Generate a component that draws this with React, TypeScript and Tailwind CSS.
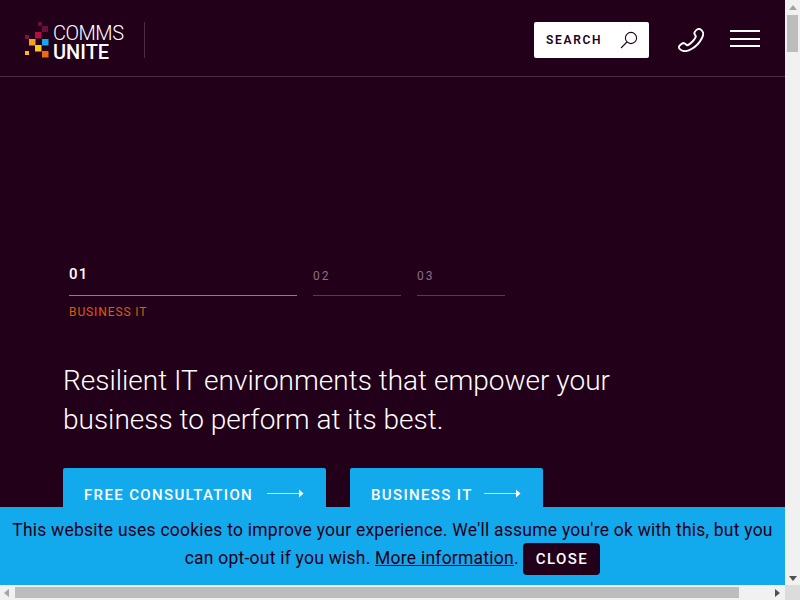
import React from "react";

const font = { fontFamily: '"Roboto", "Liberation Sans", sans-serif' };

function Logo() {
  const squares: [number, number, number, string][] = [
    [13, 0, 4, "#6a1038"],
    [17, 4, 6, "#6a1038"],
    [0, 13, 4, "#7d1338"],
    [10, 10, 6.5, "#b0123f"],
    [4, 17, 6.5, "#f5a21a"],
    [17, 17, 6.5, "#12a9ee"],
    [10, 23, 6.5, "#fdc81a"],
    [0, 29, 4, "#fdb90f"],
    [17, 29, 6.5, "#ee6a10"],
  ];
  return (
    <svg width="24" height="36" viewBox="0 0 24 36" className="shrink-0">
      {squares.map(([x, y, s, c], i) => (
        <rect key={i} x={x} y={y} width={s} height={s} fill={c} />
      ))}
    </svg>
  );
}

function Arrow() {
  return (
    <svg width="37" height="9" viewBox="0 0 37 9" className="shrink-0">
      <rect x="0" y="4" width="33" height="1" fill="#cfeefc" />
      <path d="M32 .5 L36.5 4.5 L32 8.5 Z" fill="#ffffff" />
    </svg>
  );
}

function Step({ n, active, w, label }: { n: string; active?: boolean; w: string; label?: string }) {
  return (
    <div className={w}>
      <div
        className={
          active
            ? "h-[38px] border-b border-[#f0640f] pt-[6px] text-[15px] leading-[20px] font-medium tracking-[1.2px] text-white"
            : "h-[38px] border-b border-[#5a3a52] pt-[9px] text-[12px] leading-[18px] tracking-[2px] text-[#8a7085]"
        }
      >
        {n}
      </div>
      {label && (
        <div className="mt-[9px] text-[12px] leading-[14px] tracking-[0.9px] text-[#e0590f]">{label}</div>
      )}
    </div>
  );
}

function Cta({ label, w, gap }: { label: string; w: string; gap: string }) {
  return (
    <div className={`${w} ${gap} flex h-[60px] items-start rounded-t-[2px] bg-[#12a9ed] pl-[21px] pt-[18px] text-[15px] leading-[18px] font-medium tracking-[1.35px] text-white`}>
      <span className="whitespace-nowrap">{label}</span>
      <span className="pt-[3px]">
        <Arrow />
      </span>
    </div>
  );
}

export default function App() {
  return (
    <div style={font} className="relative flex h-[600px] w-[800px] flex-col overflow-hidden bg-[#f1f1f1]">
      <div className="flex h-[585px] w-[800px]">
        <div className="h-[585px] w-[785px] overflow-hidden bg-[#22001a]">
          <header className="flex h-[77px] items-start border-b border-[#4a2c43] pl-[25px] pr-[25px] pt-[22px]">
            <div className="flex items-start gap-[4px]">
              <Logo />
              <div className="w-[72px] text-white">
                <div className="mt-[2px] text-[20px] leading-[19px] font-light tracking-[-0.5px]">COMMS</div>
                <div className="text-[20px] leading-[19px] font-medium tracking-[0px]">UNITE</div>
              </div>
            </div>
            <div className="ml-[19px] h-[36px] w-px bg-[#4a2c43]" />
            <div className="ml-auto flex h-[36px] w-[115px] items-center rounded-[2px] bg-white pl-[12px] pr-[11px]">
              <span className="text-[12px] font-semibold tracking-[1.7px] text-[#22001a]">SEARCH</span>
              <svg width="18" height="18" viewBox="0 0 18 18" className="ml-auto" fill="none" stroke="#22001a" strokeWidth="1.1">
                <circle cx="11" cy="7" r="5.6" />
                <path d="M7 11 L1 17" />
              </svg>
            </div>
            <svg width="26" height="24" viewBox="0 0 26 24" className="ml-[29px] mt-[6px]" fill="none" stroke="#ffffff" strokeWidth="1.9" strokeLinejoin="round">
              <path d="M20 1 C21.5 .4 24 2 25 4.5 C25.6 6 25 8 24 10 C22 14 18 18.5 13.5 21 C10.5 22.8 8 23.5 5.5 23 C3 22.6 .8 20.4 .8 19.2 C.8 18 3.8 15.5 5.4 15 C6.6 14.7 8.3 17.2 9.2 17.3 C11.5 17 17.5 11 17.8 8.4 C17.8 7.4 16.2 6.2 16.3 5.2 C16.5 3.8 18.6 1.6 20 1 Z" />
            </svg>
            <div className="ml-[26px] mt-[8px] flex w-[30px] flex-col gap-[5.5px]">
              <div className="h-[2px] bg-white" />
              <div className="h-[2px] bg-white" />
              <div className="h-[2px] bg-white" />
            </div>
          </header>
          <main className="pl-[64px] pt-[181px]">
            <div className="ml-[5px] flex items-start gap-[16px]">
              <Step n="01" active w="w-[228px]" label="BUSINESS IT" />
              <Step n="02" w="w-[88px]" />
              <Step n="03" w="w-[88px]" />
            </div>
            <h1 className="mt-[42px] -ml-px text-[28px] leading-[39px] font-light text-white">
              Resilient IT environments that empower your
              <br />
              business to perform at its best.
            </h1>
            <div className="ml-[-1px] mt-[29px] flex gap-[24px]">
              <Cta label="FREE CONSULTATION" w="w-[263px]" gap="gap-[14px]" />
              <Cta label="BUSINESS IT" w="w-[193px]" gap="gap-[11px]" />
            </div>
          </main>
        </div>
        <div className="flex h-[585px] w-[15px] flex-col items-center bg-[#f1f1f1]">
          <div className="mt-[5px] h-0 w-0 border-x-[4px] border-b-[5px] border-x-transparent border-b-[#a3a3a3]" />
          <div className="mt-[5px] h-[37px] w-[11px] bg-[#bdbdbd]" />
          <div className="mt-auto mb-[4px] h-0 w-0 border-x-[4px] border-t-[5px] border-x-transparent border-t-[#505050]" />
        </div>
      </div>
      <div className="flex h-[15px] w-[800px] items-center bg-[#f1f1f1]">
        <div className="ml-[4px] h-0 w-0 border-y-[4px] border-r-[5px] border-y-transparent border-r-[#a3a3a3]" />
        <div className="ml-[6px] h-[11px] w-[724px] bg-[#bdbdbd]" />
        <div className="ml-[36px] h-0 w-0 border-y-[4px] border-l-[5px] border-y-transparent border-l-[#505050]" />
        <div className="ml-auto h-[15px] w-[15px] bg-[#dcdcdc]" />
      </div>
      <div className="absolute left-0 top-[507px] h-[78px] w-[785px] bg-[#12a9ed] px-[8px] pt-[9px] text-center text-[17.5px] leading-[28px] tracking-[0.235px] whitespace-nowrap text-[#22001a]">
        This website uses cookies to improve your experience. We'll assume you're ok with this, but you
        <br />
        can opt-out if you wish. <span className="underline">More information</span>.{" "}
        <span className="mt-[-1px] inline-block h-[32px] w-[77px] rounded-[4px] bg-[#22001a] text-center align-top text-[15px] leading-[32px] font-medium tracking-[1.4px] text-white">
          CLOSE
        </span>
      </div>
    </div>
  );
}
